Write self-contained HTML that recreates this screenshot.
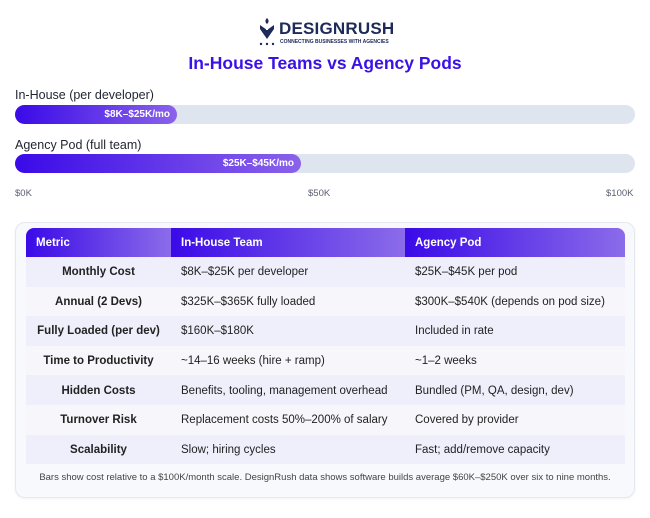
<!DOCTYPE html>
<html><head><meta charset="utf-8"><style>
*{margin:0;padding:0;box-sizing:border-box}
body{width:650px;height:518px;background:#fff;font-family:"Liberation Sans",Arial,sans-serif;color:#1f2430;position:relative;overflow:hidden}
.abs{position:absolute}
.lbl{font-size:12.5px;color:#1f2430;font-weight:500}
.track{position:absolute;left:15px;width:620px;height:19px;border-radius:10px;background:#dfe5ee}
.fill{position:absolute;left:0;top:0;height:19px;border-radius:10px;background:linear-gradient(90deg,#3a0ae8,#8a62ea);color:#fff;font-size:10px;font-weight:bold;text-align:right;padding-right:7px;line-height:19px}
.ax{font-size:9.5px;color:#5a6070;top:188px}
.card{left:15px;top:222px;width:620px;height:276px;border:1px solid #e6e8ef;border-radius:10px;background:#f8f9fc;box-shadow:0 1px 3px rgba(0,0,0,.05)}
table{position:absolute;left:26px;top:228px;width:599px;border-collapse:collapse;font-size:11.5px}
th{height:29px;color:#fff;text-align:left;font-weight:bold;padding-left:10px;background:linear-gradient(90deg,#3a0ae8,#8b6ce9)}
th.c1{width:145px;border-top-left-radius:8px}
th.c2{width:234px}
th.c3{border-top-right-radius:8px}
td{height:29.6px;padding-left:10px;color:#222;padding-top:1px}
td.m{text-align:center;font-weight:bold;padding-left:0}
tr.o td{background:#efeefb}
tr.e td{background:#f7f7fb}
.note{left:15px;width:620px;top:472px;text-align:center;font-size:9.5px;color:#444}
</style></head><body>
<svg class="abs" style="left:257px;top:17px" width="20" height="30" viewBox="0 0 20 30">
<path d="M10 1c-3 3-1 5 0 6 1-1 3-3 0-6z" fill="#1d2a5a"/>
<path d="M3 8l7 5 7-5v4l-7 10-7-10z" fill="#1d2a5a"/>
<rect x="9" y="9" width="2" height="4" fill="#fff"/>
<circle cx="4" cy="27" r="1.2" fill="#1d2a5a"/><circle cx="10" cy="27" r="1.2" fill="#1d2a5a"/><circle cx="16" cy="27" r="1.2" fill="#1d2a5a"/>
</svg>
<div class="abs" style="left:279px;top:19px;font-size:17px;font-weight:bold;color:#1d2a5a;letter-spacing:0.2px">DESIGNRUSH</div>
<div class="abs" style="left:280px;top:39px;font-size:5px;font-weight:bold;color:#1d2a5a">CONNECTING BUSINESSES WITH AGENCIES</div>
<div class="abs" style="left:0;width:650px;top:53px;text-align:center;font-size:17.5px;font-weight:bold;color:#3b12e6">In-House Teams vs Agency Pods</div>
<div class="abs lbl" style="left:15px;top:88px">In-House (per developer)</div>
<div class="track" style="top:105px"><div class="fill" style="width:162px">$8K–$25K/mo</div></div>
<div class="abs lbl" style="left:15px;top:138px">Agency Pod (full team)</div>
<div class="track" style="top:154px"><div class="fill" style="width:286px">$25K–$45K/mo</div></div>
<div class="abs ax" style="left:15px">$0K</div>
<div class="abs ax" style="left:308px">$50K</div>
<div class="abs ax" style="left:606px">$100K</div>
<div class="abs card"></div>
<table>
<tr><th class="c1">Metric</th><th class="c2">In-House Team</th><th class="c3">Agency Pod</th></tr>
<tr class="o"><td class="m">Monthly Cost</td><td>$8K–$25K per developer</td><td>$25K–$45K per pod</td></tr>
<tr class="e"><td class="m">Annual (2 Devs)</td><td>$325K–$365K fully loaded</td><td>$300K–$540K (depends on pod size)</td></tr>
<tr class="o"><td class="m">Fully Loaded (per dev)</td><td>$160K–$180K</td><td>Included in rate</td></tr>
<tr class="e"><td class="m">Time to Productivity</td><td>~14–16 weeks (hire + ramp)</td><td>~1–2 weeks</td></tr>
<tr class="o"><td class="m">Hidden Costs</td><td>Benefits, tooling, management overhead</td><td>Bundled (PM, QA, design, dev)</td></tr>
<tr class="e"><td class="m">Turnover Risk</td><td>Replacement costs 50%–200% of salary</td><td>Covered by provider</td></tr>
<tr class="o"><td class="m">Scalability</td><td>Slow; hiring cycles</td><td>Fast; add/remove capacity</td></tr>
</table>
<div class="abs note">Bars show cost relative to a $100K/month scale. DesignRush data shows software builds average $60K–$250K over six to nine months.</div>
</body></html>
